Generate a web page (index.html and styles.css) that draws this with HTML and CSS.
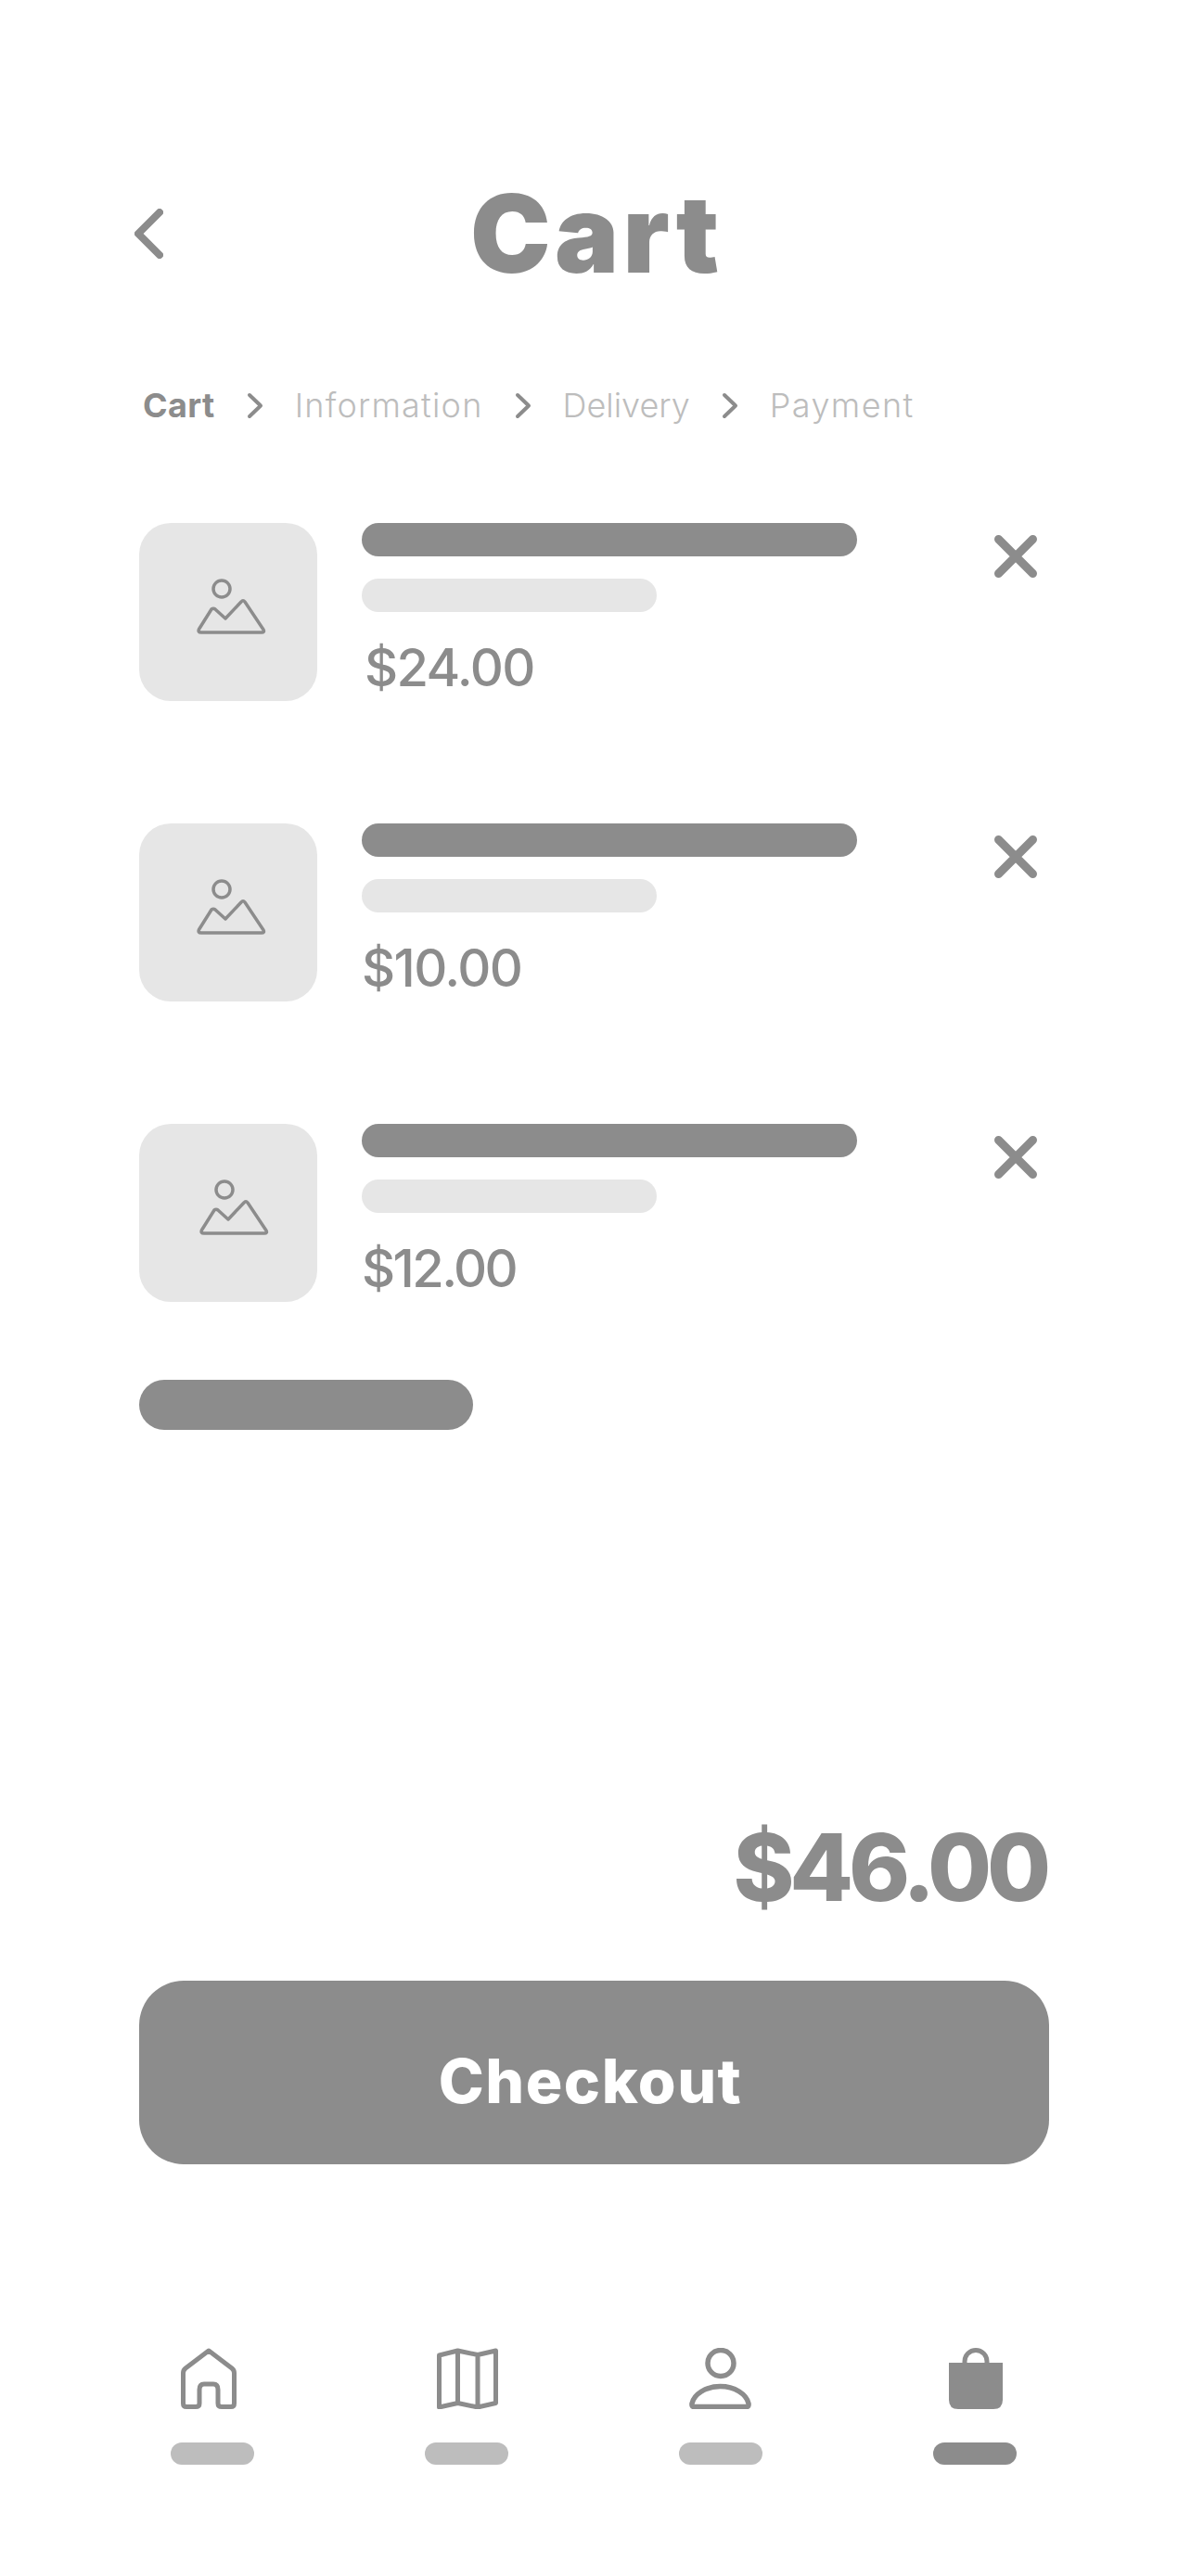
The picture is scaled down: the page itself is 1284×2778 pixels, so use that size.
FILE: index.html
```html
<!DOCTYPE html>
<html lang="en">
<head>
<meta charset="utf-8">
<title>Cart</title>
<link rel="stylesheet" href="styles.css">
</head>
<body>
<main class="page">
  <header class="header">
    <svg class="back" width="31" height="54" viewBox="0 0 31 54"><path d="M27 4 L4 27 L27 50"/></svg>
    <h1 class="title">Cart</h1>
  </header>
  <nav class="crumbs">
    <span class="crumb crumb-active">Cart</span>
    <svg class="crumb-sep" width="18" height="29" viewBox="0 0 18 29"><path d="M3 3 L15 14.5 L3 26"/></svg>
    <span class="crumb crumb-info">Information</span>
    <svg class="crumb-sep" width="18" height="29" viewBox="0 0 18 29"><path d="M3 3 L15 14.5 L3 26"/></svg>
    <span class="crumb crumb-delivery">Delivery</span>
    <svg class="crumb-sep" width="18" height="29" viewBox="0 0 18 29"><path d="M3 3 L15 14.5 L3 26"/></svg>
    <span class="crumb crumb-payment">Payment</span>
  </nav>
  <section class="items">
    <article class="item">
      <div class="thumb"><svg class="thumb-icon" viewBox="0 0 192 192"><circle cx="89" cy="71" r="9"/><path d="M67 118 H132 Q135.5 118 134 115 L114 85 Q112 82.5 110 85 L93 103 L82 93 Q80 91.5 78 93 L64.5 114.5 Q63 118 67 118 Z"/></svg></div>
      <div class="info">
        <div class="bar bar-dark"></div>
        <div class="bar bar-light"></div>
        <div class="price price-first">$24.00</div>
      </div>
      <svg class="remove" width="46" height="46" viewBox="0 0 46 46"><path d="M4.5 4.5 L41.5 41.5 M41.5 4.5 L4.5 41.5"/></svg>
    </article>
    <article class="item">
      <div class="thumb"><svg class="thumb-icon" viewBox="0 0 192 192"><circle cx="89" cy="71" r="9"/><path d="M67 118 H132 Q135.5 118 134 115 L114 85 Q112 82.5 110 85 L93 103 L82 93 Q80 91.5 78 93 L64.5 114.5 Q63 118 67 118 Z"/></svg></div>
      <div class="info">
        <div class="bar bar-dark"></div>
        <div class="bar bar-light"></div>
        <div class="price">$10.00</div>
      </div>
      <svg class="remove" width="46" height="46" viewBox="0 0 46 46"><path d="M4.5 4.5 L41.5 41.5 M41.5 4.5 L4.5 41.5"/></svg>
    </article>
    <article class="item">
      <div class="thumb"><svg class="thumb-icon thumb-icon-shift" viewBox="0 0 192 192"><circle cx="89" cy="71" r="9"/><path d="M67 118 H132 Q135.5 118 134 115 L114 85 Q112 82.5 110 85 L93 103 L82 93 Q80 91.5 78 93 L64.5 114.5 Q63 118 67 118 Z"/></svg></div>
      <div class="info">
        <div class="bar bar-dark"></div>
        <div class="bar bar-light"></div>
        <div class="price price-tight">$12.00</div>
      </div>
      <svg class="remove" width="46" height="46" viewBox="0 0 46 46"><path d="M4.5 4.5 L41.5 41.5 M41.5 4.5 L4.5 41.5"/></svg>
    </article>
  </section>
  <div class="pill"></div>
  <div class="total">$46.00</div>
  <button class="checkout"><span class="checkout-label">Checkout</span></button>
  <footer class="tabs">
    <div class="tab">
      <svg class="tab-icon tab-home" width="60" height="66" viewBox="0 0 60 66"><path d="M30 3 L55 22 Q57.5 24 57.5 27 V60 Q57.5 63.5 54 63.5 H44 Q40 63.5 40 60 V45 Q40 39 35 39 H25 Q20 39 20 45 V60 Q20 63.5 16 63.5 H6 Q2.5 63.5 2.5 60 V27 Q2.5 24 5 22 Z"/></svg>
      <div class="tab-bar"></div>
    </div>
    <div class="tab">
      <svg class="tab-icon tab-map" width="66" height="66" viewBox="0 0 66 66"><path d="M2.5 8 L22.5 3 L44 7.5 L63.5 3 V59.5 L44 64 L22.5 59.5 L2.5 64 Z M22.5 3 V59.5 M44 7.5 V64"/></svg>
      <div class="tab-bar"></div>
    </div>
    <div class="tab">
      <svg class="tab-icon tab-person" width="67" height="66" viewBox="0 0 67 66"><circle cx="34" cy="16.5" r="14"/><path d="M33.5 41.5 C18 41.5 5 50 3 60 Q2.5 63.5 5 63.5 H62 Q64.5 63.5 64 60 C62 50 49 41.5 33.5 41.5 Z"/></svg>
      <div class="tab-bar"></div>
    </div>
    <div class="tab">
      <svg class="tab-icon tab-bag" width="58" height="66" viewBox="0 0 58 66"><path class="bag-handle" d="M17 18 V14.5 A12 12 0 0 1 41 14.5 V18"/><path class="bag-body" d="M0 16 H58 V56 Q58 66 48 66 H10 Q0 66 0 56 Z"/></svg>
      <div class="tab-bar tab-bar-active"></div>
    </div>
  </footer>
</main>
</body>
</html>
```
FILE: styles.css
```css
* { box-sizing: border-box; }
html, body { margin: 0; padding: 0; background: #fff; }
body { font-family: "Inter", "Liberation Sans", sans-serif; color: #8c8c8c; }
svg { display: block; fill: none; stroke: #8c8c8c; stroke-linecap: round; stroke-linejoin: round; }

.page { width: 1284px; height: 2778px; padding-left: 150px; overflow: hidden; }

.header { display: flex; align-items: center; height: 120px; margin-top: 192px; margin-left: -5px; }
.back { stroke-width: 8; flex: none; }
.title { margin: 0 0 0 331px; font-size: 116px; line-height: 120px; font-weight: 900; letter-spacing: 4.3px; }

.crumbs { display: flex; align-items: center; height: 40px; margin-top: 105px; margin-left: 4px; }
.crumb { font-size: 36px; line-height: 40px; font-weight: 300; color: #bdbdbd; white-space: nowrap; }
.crumb-active { font-weight: 700; color: #8c8c8c; letter-spacing: 0.4px; }
.crumb-info { letter-spacing: 1.2px; }
.crumb-delivery { letter-spacing: 0; }
.crumb-payment { letter-spacing: 1.4px; }
.crumb-sep { stroke-width: 4; flex: none; margin: 0 34px; }

.items { margin-top: 107px; display: flex; flex-direction: column; gap: 132px; }
.item { display: flex; align-items: flex-start; height: 192px; }
.thumb { width: 192px; height: 192px; background: #e6e6e6; border-radius: 34px; flex: none; }
.thumb-icon { width: 192px; height: 192px; stroke-width: 3.5; }
.thumb-icon-shift { transform: translateX(3px); }
.info { width: 534px; margin-left: 48px; flex: none; }
.bar { height: 36px; border-radius: 18px; }
.bar-dark { width: 534px; background: #8c8c8c; }
.bar-light { width: 318px; margin-top: 24px; background: #e6e6e6; }
.price { font-size: 56px; line-height: 64px; font-weight: 500; margin-top: 28px; letter-spacing: -1.6px; white-space: nowrap; }
.price-first { margin-left: 3px; }
.price-tight { letter-spacing: -2.6px; }
.remove { stroke-width: 9; flex: none; margin-left: 148px; margin-top: 13px; }

.pill { width: 360px; height: 54px; margin-top: 84px; background: #8c8c8c; border-radius: 27px; }

.total { width: 978px; margin-top: 417px; text-align: right; font-size: 100px; line-height: 110px; font-weight: 800; letter-spacing: -5.2px; }

.checkout { display: flex; align-items: center; justify-content: center; width: 981px; height: 198px; margin-top: 67px; padding: 18px 8px 0 0; border: 0; border-radius: 48px; background: #8c8c8c; color: #fff; font-family: inherit; font-size: 66px; font-weight: 800; }
.checkout-label { letter-spacing: 1.5px; }

.tabs { display: flex; gap: 184px; margin-top: 198px; margin-left: 34px; }
.tab { width: 90px; display: flex; flex-direction: column; }
.tab-icon { flex: none; stroke-width: 5; }
.tab-home { margin-left: 11px; }
.tab-map { margin-left: 13px; }
.tab-person { margin-left: 11px; stroke-width: 5.5; }
.tab-bag { margin-left: 17px; overflow: visible; }
.bag-body { fill: #8c8c8c; stroke: none; }
.bag-handle { stroke-width: 5; }
.tab-bar { width: 90px; height: 24px; margin-top: 36px; border-radius: 12px; background: #bdbdbd; }
.tab-bar-active { background: #8c8c8c; }
```
